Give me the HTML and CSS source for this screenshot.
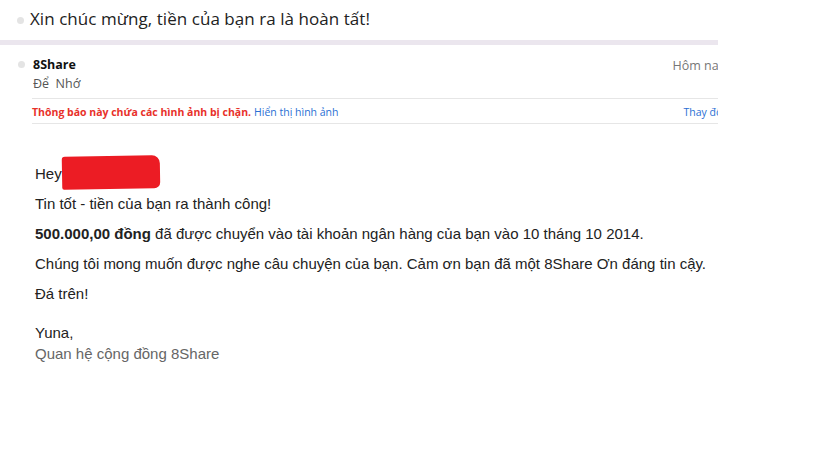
FILE: index.html
```html
<!DOCTYPE html>
<html lang="vi">
<head>
<meta charset="utf-8">
<link rel="stylesheet" href="styles.css">
</head>
<body>
<div class="pane">
  <header class="subject">
    <span class="dot"></span>
    <h1>Xin chúc mừng, tiền của bạn ra là hoàn tất!</h1>
  </header>
  <div class="band"></div>
  <section class="meta">
    <div class="sender-row">
      <span class="dot small"></span>
      <div class="sender">
        <div class="name">8Share</div>
        <div class="to">Để&nbsp; Nhớ</div>
      </div>
      <div class="date">Hôm nay</div>
    </div>
    <div class="blocked">
      <span class="warn">Thông báo này chứa các hình ảnh bị chặn.</span>
      <a class="link">Hiển thị hình ảnh</a>
      <a class="link right">Thay đổi</a>
    </div>
  </section>
  <article class="body">
    <p>Hey<span class="redact"></span></p>
    <p>Tin tốt - tiền của bạn ra thành công!</p>
    <p><b>500.000,00 đồng</b> đã được chuyển vào tài khoản ngân hàng của bạn vào 10 tháng 10 2014.</p>
    <p>Chúng tôi mong muốn được nghe câu chuyện của bạn. Cảm ơn bạn đã một 8Share Ơn đáng tin cậy.</p>
    <p>Đá trên!</p>
    <div class="sign">
      <div>Yuna,</div>
      <div class="team">Quan hệ cộng đồng 8Share</div>
    </div>
  </article>
</div>
</body>
</html>
```
FILE: styles.css
```css
html, body { margin: 0; padding: 0; background: #fff; }
body { width: 819px; height: 460px; overflow: hidden; }
.pane { width: 718px; overflow: hidden; font-family: "Open Sans", "Noto Sans", sans-serif; }
.subject { display: flex; align-items: center; height: 40px; padding-left: 17px; }
.dot { width: 7px; height: 7px; border-radius: 50%; background: #e4e4e4; margin-right: 6px; flex: none; }
.subject h1 { margin: 0; font-weight: 400; font-size: 17px; color: #222; white-space: nowrap; position: relative; top: -2px; letter-spacing: 0.05px; }
.band { height: 5px; background: #ebe6ee; }
.meta { padding-left: 32px; }
.sender-row { display: flex; align-items: flex-start; padding-top: 11px; height: 42px; margin-left: -14px; }
.dot.small { margin-top: 5px; margin-right: 8px; }
.sender { flex: 1; }
.name { font-weight: 700; font-size: 12.5px; color: #111; line-height: 17px; }
.to { font-size: 12.5px; color: #555; line-height: 20px; margin-top: 1px; }
.date { font-size: 12.5px; color: #777; white-space: nowrap; margin-right: -7px; line-height: 17px; padding-top: 1px; }
.blocked { display: flex; align-items: baseline; border-top: 1px solid #e6e6e6; border-bottom: 1px solid #e6e6e6; height: 26px; box-sizing: border-box; padding-top: 6px; white-space: nowrap; }
.warn { color: #e8312a; font-weight: 700; font-size: 10.5px; }
.link { color: #2a6fd4; font-size: 10.5px; margin-left: 3px; }
.link.right { margin-left: auto; margin-right: -7px; }
.body { padding: 41px 0 0 35px; font-family: "Liberation Sans", Arial, sans-serif; font-size: 15px; color: #222; }
.body p { margin: 0 0 13px; line-height: 17px; white-space: nowrap; }
.redact { display: inline-block; vertical-align: baseline; width: 98px; height: 33px; margin: -10px 0 -10px 0; background: #ec1c24; border-radius: 3px 8px 6px 2px; transform: rotate(-1deg); }
.sign { margin-top: 20px; line-height: 21px; }
.team { color: #666; }
```
